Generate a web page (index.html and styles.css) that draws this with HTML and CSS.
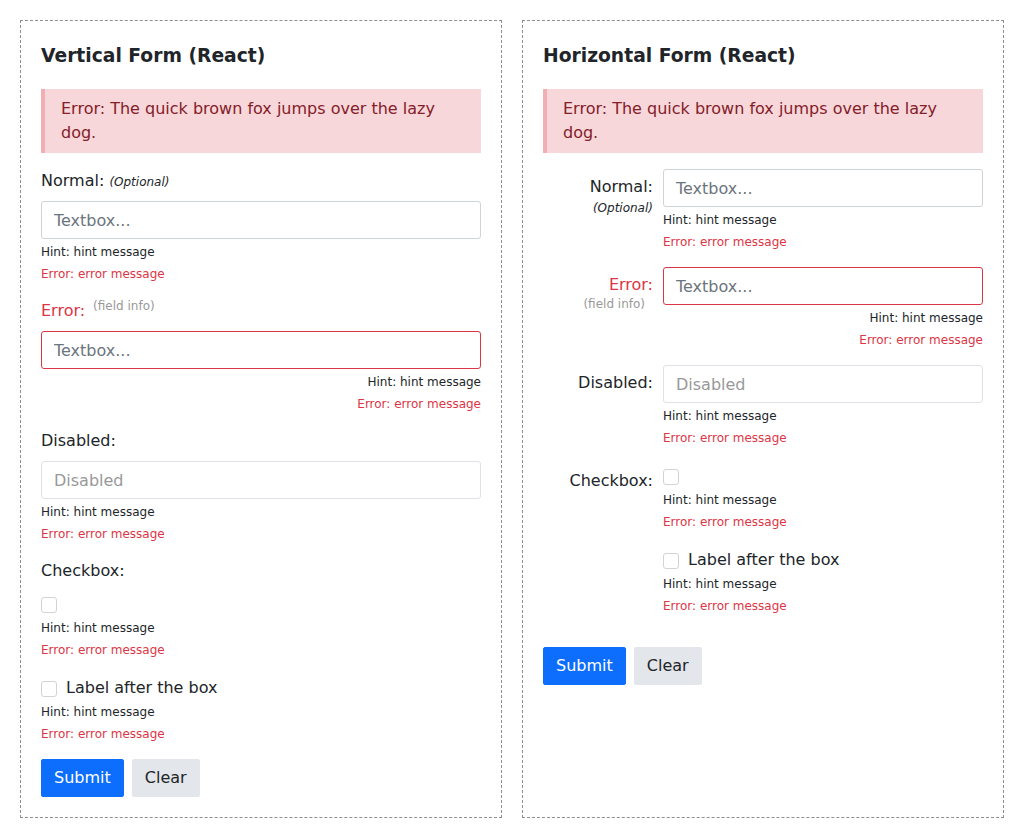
FILE: index.html
```html
<!DOCTYPE html>
<html lang="en">
<head>
<meta charset="utf-8">
<title>Forms</title>
<link rel="stylesheet" href="styles.css">
</head>
<body>
<div class="page">
  <section class="panel">
    <h3 class="title">Vertical Form (React)</h3>
    <div class="alert">Error: The quick brown fox jumps over the lazy dog.</div>

    <div class="group">
      <label class="label">Normal: <i class="optional">(Optional)</i></label>
      <input class="control" type="text" placeholder="Textbox...">
      <div class="hint">Hint: hint message</div>
      <div class="err">Error: error message</div>
    </div>

    <div class="group">
      <label class="label is-error">Error:<span class="info">(field info)</span></label>
      <input class="control control-error" type="text" placeholder="Textbox...">
      <div class="hint right">Hint: hint message</div>
      <div class="err right">Error: error message</div>
    </div>

    <div class="group">
      <label class="label">Disabled:</label>
      <input class="control" type="text" value="Disabled" disabled>
      <div class="hint">Hint: hint message</div>
      <div class="err">Error: error message</div>
    </div>

    <div class="group">
      <label class="label">Checkbox:</label>
      <div class="check-row"><span class="box"></span></div>
      <div class="hint">Hint: hint message</div>
      <div class="err">Error: error message</div>
    </div>

    <div class="group">
      <div class="check-row"><span class="box"></span><span class="check-label">Label after the box</span></div>
      <div class="hint">Hint: hint message</div>
      <div class="err">Error: error message</div>
    </div>

    <div class="buttons">
      <button class="btn btn-primary" type="button">Submit</button>
      <button class="btn btn-light" type="button">Clear</button>
    </div>
  </section>

  <section class="panel">
    <h3 class="title">Horizontal Form (React)</h3>
    <div class="alert">Error: The quick brown fox jumps over the lazy dog.</div>

    <div class="group hrow">
      <div class="hlabel">
        <label class="hlabel-main">Normal:</label>
        <i class="hsub optional">(Optional)</i>
      </div>
      <div class="hcontrol">
        <input class="control" type="text" placeholder="Textbox...">
        <div class="hint">Hint: hint message</div>
        <div class="err">Error: error message</div>
      </div>
    </div>

    <div class="group hrow">
      <div class="hlabel">
        <label class="hlabel-main is-error">Error:</label>
        <span class="hsub hinfo">(field info)</span>
      </div>
      <div class="hcontrol">
        <input class="control control-error" type="text" placeholder="Textbox...">
        <div class="hint right">Hint: hint message</div>
        <div class="err right">Error: error message</div>
      </div>
    </div>

    <div class="group hrow">
      <div class="hlabel">
        <label class="hlabel-main">Disabled:</label>
      </div>
      <div class="hcontrol">
        <input class="control" type="text" value="Disabled" disabled>
        <div class="hint">Hint: hint message</div>
        <div class="err">Error: error message</div>
      </div>
    </div>

    <div class="group hrow">
      <div class="hlabel">
        <label class="hlabel-main">Checkbox:</label>
      </div>
      <div class="hcontrol">
        <div class="check-row"><span class="box"></span></div>
        <div class="hint">Hint: hint message</div>
        <div class="err">Error: error message</div>
      </div>
    </div>

    <div class="group hrow">
      <div class="hlabel"></div>
      <div class="hcontrol">
        <div class="check-row"><span class="box"></span><span class="check-label">Label after the box</span></div>
        <div class="hint">Hint: hint message</div>
        <div class="err">Error: error message</div>
      </div>
    </div>

    <div class="buttons buttons-h">
      <button class="btn btn-primary" type="button">Submit</button>
      <button class="btn btn-light" type="button">Clear</button>
    </div>
  </section>
</div>
</body>
</html>
```

FILE: styles.css
```css
* {
  box-sizing: border-box;
}

html, body {
  margin: 0;
  padding: 0;
  background: #ffffff;
}

body {
  font-family: "DejaVu Sans", "Liberation Sans", sans-serif;
  font-size: 16px;
  line-height: 1.5;
  color: #212529;
}

.page {
  display: flex;
  align-items: stretch;
  gap: 20px;
  padding: 20px;
}

.panel {
  flex: 1 1 0;
  border: 1px dashed #8f8f8f;
  padding: 20px;
  min-width: 0;
}

.title {
  margin: 0 0 20px;
  font-size: 18.72px;
  font-weight: bold;
  line-height: 28px;
  padding-top: 1px;
  height: 28px;
}

.alert {
  background: #f8d7da;
  color: #842029;
  border-left: 4px solid #f1aeb5;
  padding: 8px 16px;
  margin-bottom: 16px;
}

.group {
  margin-bottom: 16px;
}

.label {
  display: block;
  margin-bottom: 8px;
}

.is-error {
  color: #dc3545;
}

.optional {
  font-size: 12px;
  color: #212529;
}

.info {
  font-size: 12px;
  color: #999999;
  margin: 0 8px;
  line-height: 0;
  vertical-align: 6px;
}

.control {
  display: block;
  width: 100%;
  height: 38px;
  padding: 6px 12px;
  font-family: inherit;
  font-size: 16px;
  line-height: 24px;
  color: #212529;
  background: #ffffff;
  border: 1px solid #ced4da;
  border-radius: 3px;
  margin: 0;
}

.control::placeholder {
  color: #6c757d;
  opacity: 1;
}

.control-error {
  border-color: #dc3545;
}

.control:disabled {
  background: #ffffff;
  border-color: #dee2e6;
  color: #999999;
  -webkit-text-fill-color: #999999;
}

.hint,
.err {
  font-size: 12px;
  line-height: 18px;
  margin-top: 4px;
}

.hint {
  color: #212529;
}

.err {
  color: #dc3545;
}

.right {
  text-align: right;
}

.check-row {
  display: flex;
  align-items: flex-start;
  height: 24px;
}

.box {
  display: block;
  width: 16px;
  height: 16px;
  margin-top: 6px;
  border: 1px solid #ced4da;
  border-radius: 3px;
  background: #ffffff;
  flex: none;
}

.check-label {
  margin-left: 9px;
  line-height: 24px;
  position: relative;
  top: 1px;
}

.buttons {
  display: flex;
  gap: 8px;
}

.buttons-h {
  margin-top: 32px;
}

.btn {
  font-family: inherit;
  font-size: 16px;
  line-height: 24px;
  padding: 6px 12px;
  border: 1px solid transparent;
  border-radius: 2px;
  cursor: pointer;
}

.btn-primary {
  background: #0d6efd;
  border-color: #0d6efd;
  color: #ffffff;
}

.btn-light {
  background: #e3e6ea;
  border-color: #e3e6ea;
  color: #212529;
}

.hrow {
  display: grid;
  grid-template-columns: 110px 1fr;
  column-gap: 10px;
}

.hlabel {
  display: flex;
  flex-direction: column;
  align-items: flex-end;
  text-align: right;
  padding-top: 6px;
}

.hlabel-main {
  display: block;
  line-height: 24px;
}

.hsub {
  display: block;
  line-height: 18px;
}

.hinfo {
  font-size: 12px;
  color: #999999;
  line-height: 14px;
  margin-right: 8px;
}

.hcontrol {
  min-width: 0;
}
```
